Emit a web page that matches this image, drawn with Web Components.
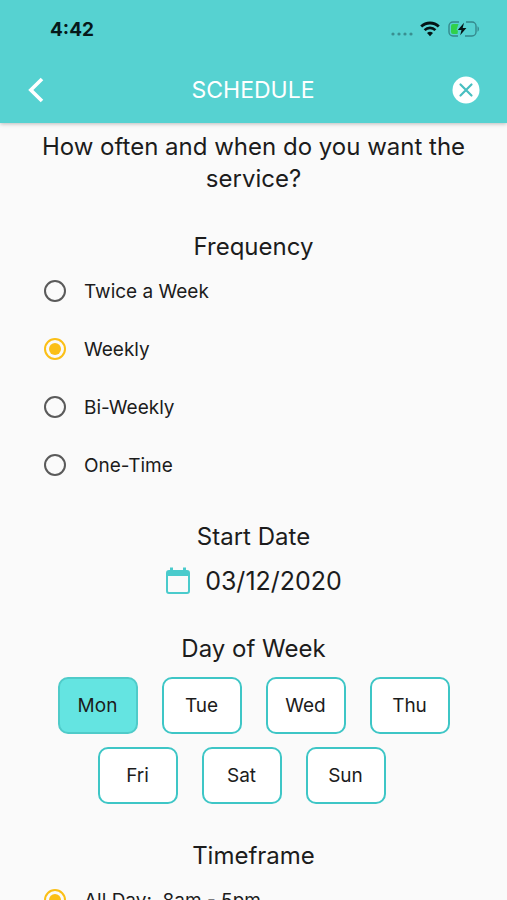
<!DOCTYPE html>
<html lang="en">
<head>
  <meta charset="UTF-8">
  <meta name="viewport" content="width=device-width, initial-scale=1.0">
  <title>Schedule</title>
  <style>
    body {
      margin: 0;
      font-family: Inter, "Liberation Sans", sans-serif;
      color: #1c1c1c;
      background-color: #fafafa;
    }
  </style>
</head>
<body>
  <schedule-page></schedule-page>

  <script>
    class StatusBar extends HTMLElement {
      constructor() {
        super();
        this.attachShadow({ mode: 'open' });
      }

      connectedCallback() {
        this.shadowRoot.innerHTML = `
          <style>
            :host {
              display: flex;
              justify-content: space-between;
              align-items: center;
              height: 58px;
              padding: 0 26px 0 50px;
              color: #06191a;
              font-size: 19px;
              font-weight: 700;
            }
            .icons { display: flex; align-items: center; gap: 7px; }
            svg { display: block; }
          </style>
          <time>${this.getAttribute('time')}</time>
          <div class="icons">
            <svg width="23" height="18" viewBox="0 0 23 18" fill="#398f91" aria-hidden="true">
              <circle cx="3" cy="14" r="1.6"/><circle cx="9" cy="14" r="1.6"/>
              <circle cx="15" cy="14" r="1.6"/><circle cx="21" cy="14" r="1.6"/>
            </svg>
            <svg width="20" height="18" viewBox="0 0 20 18" fill="none" stroke="#041415" aria-hidden="true">
              <path d="M1.2 6.6a12.6 12.6 0 0 1 17.6 0" stroke-width="2.8"/>
              <path d="M4.6 10.1a7.7 7.7 0 0 1 10.8 0" stroke-width="2.7"/>
              <path d="M10 16.2l-3-3.1a4.3 4.3 0 0 1 6 0z" fill="#041415" stroke="none"/>
            </svg>
            <svg width="34" height="18" viewBox="0 0 34 18" aria-hidden="true">
              <path d="M12 2H6a4 4 0 0 0-4 4v6a4 4 0 0 0 4 4h5M19 2h6a4 4 0 0 1 4 4v6a4 4 0 0 1-4 4h-7" fill="none" stroke="#35888c" stroke-width="1.4"/>
              <path d="M30.5 6.3c1.9.6 1.9 4.8 0 5.4z" fill="#35888c"/>
              <path d="M11.5 4H6a2 2 0 0 0-2 2v6a2 2 0 0 0 2 2h4.5l.5-3.5-1.5-.5z" fill="#30d04b"/>
              <path d="M17 2.8l-6.2 7.2h3.7l-1.3 5.2 6.2-7.2h-3.7z" fill="#041415"/>
            </svg>
          </div>
        `;
      }
    }

    class AppHeader extends HTMLElement {
      constructor() {
        super();
        this.attachShadow({ mode: 'open' });
      }

      connectedCallback() {
        this.shadowRoot.innerHTML = `
          <style>
            :host {
              display: block;
              flex: none;
              z-index: 1;
              background-color: #56d2d1;
              box-shadow: 0 1px 4px rgba(0, 0, 0, 0.25);
            }
            nav {
              display: grid;
              grid-template-columns: 40px 1fr 40px;
              align-items: center;
              height: 63px;
              padding: 0 21px 2px 20px;
            }
            h1 {
              margin: 0;
              color: white;
              font-size: 23px;
              font-weight: 400;
              text-align: center;
            }
            button {
              display: grid;
              place-items: center;
              height: 40px;
              padding: 0;
              border: 0;
              background: none;
              cursor: pointer;
            }
            button:first-child { justify-content: start; padding-left: 8px; }
          </style>
          <slot name="status"></slot>
          <nav>
            <button type="button" aria-label="Back">
              <svg width="16" height="26" viewBox="0 0 16 26" fill="none" stroke="white" stroke-width="3.6">
                <path d="M14 2L2.8 13 14 24"/>
              </svg>
            </button>
            <h1><slot></slot></h1>
            <button type="button" aria-label="Close">
              <svg width="28" height="28" viewBox="0 0 28 28">
                <circle cx="14" cy="14" r="13.5" fill="white"/>
                <path d="M8.5 8.5l11 11M19.5 8.5l-11 11" stroke="#48bfc1" stroke-width="2.2" stroke-linecap="round"/>
              </svg>
            </button>
          </nav>
        `;
      }
    }

    class FormSection extends HTMLElement {
      constructor() {
        super();
        this.attachShadow({ mode: 'open' });
      }

      connectedCallback() {
        this.shadowRoot.innerHTML = `
          <style>
            :host { display: block; }
            h2 {
              margin: 0;
              font-size: 24px;
              font-weight: 400;
              line-height: 32px;
              text-align: center;
            }
          </style>
          <h2>${this.getAttribute('heading')}</h2>
          <slot></slot>
        `;
      }
    }

    class RadioList extends HTMLElement {
      constructor() {
        super();
        this.attachShadow({ mode: 'open' });
      }

      connectedCallback() {
        const selected = this.getAttribute('selected');
        const rows = this.getAttribute('options').split('|').map((option) => `
          <label>
            <input type="radio" name="choice" value="${option}" ${option === selected ? 'checked' : ''}>
            <span>${option}</span>
          </label>
        `).join('');

        this.shadowRoot.innerHTML = `
          <style>
            :host {
              display: grid;
              gap: 18px;
              margin-top: 8px;
              padding: 0 44px;
            }
            label {
              display: flex;
              align-items: center;
              gap: 18px;
              height: 40px;
              font-size: 19px;
            }
            span { white-space: pre; }
            input {
              appearance: none;
              display: grid;
              place-items: center;
              box-sizing: border-box;
              width: 22px;
              height: 22px;
              margin: 0;
              border: 2px solid #5a5a5a;
              border-radius: 50%;
            }
            input:checked { border-color: #fbbf16; }
            input:checked::before {
              content: "";
              width: 12px;
              height: 12px;
              border-radius: 50%;
              background-color: #fbbf16;
            }
          </style>
          ${rows}
        `;
      }
    }

    class DateField extends HTMLElement {
      constructor() {
        super();
        this.attachShadow({ mode: 'open' });
      }

      connectedCallback() {
        this.shadowRoot.innerHTML = `
          <style>
            :host {
              display: flex;
              justify-content: center;
              margin-top: 12px;
            }
            button {
              display: flex;
              align-items: center;
              gap: 14px;
              padding: 0;
              border: 0;
              background: none;
              color: inherit;
              font: inherit;
              font-size: 25px;
              line-height: 32px;
              cursor: pointer;
            }
          </style>
          <button type="button">
            <svg width="26" height="28" viewBox="0 0 26 28" aria-hidden="true">
              <path d="M4 3h1V.5h3V3h10V.5h3V3h1a3 3 0 0 1 3 3v18a3 3 0 0 1-3 3H4a3 3 0 0 1-3-3V6a3 3 0 0 1 3-3zM3 9v15a1 1 0 0 0 1 1h18a1 1 0 0 0 1-1V9z" fill="#4acbcc" fill-rule="evenodd"/>
            </svg>
            <span>${this.getAttribute('value')}</span>
          </button>
        `;
      }
    }

    class DayPicker extends HTMLElement {
      constructor() {
        super();
        this.attachShadow({ mode: 'open' });
      }

      connectedCallback() {
        const days = ['Mon', 'Tue', 'Wed', 'Thu', 'Fri', 'Sat', 'Sun'];
        const selected = this.getAttribute('selected');

        this.shadowRoot.innerHTML = `
          <style>
            :host {
              display: flex;
              flex-wrap: wrap;
              justify-content: center;
              gap: 13px 24px;
              max-width: 440px;
              margin: 12px auto 0;
            }
            button {
              box-sizing: border-box;
              width: 80px;
              height: 57px;
              padding: 0;
              border: 2px solid #3ec6c6;
              border-radius: 10px;
              background-color: white;
              color: inherit;
              font: inherit;
              font-size: 19px;
              cursor: pointer;
            }
            button:last-child { margin-right: 24px; }
            button[aria-pressed="true"] {
              border-color: #4fcbc9;
              background-color: #64e4e1;
            }
          </style>
          ${days.map((day) => `<button type="button" aria-pressed="${day === selected}">${day}</button>`).join('')}
        `;

        const buttons = this.shadowRoot.querySelectorAll('button');
        buttons.forEach((button) => {
          button.addEventListener('click', () => {
            buttons.forEach((other) => other.setAttribute('aria-pressed', other === button));
          });
        });
      }
    }

    class SchedulePage extends HTMLElement {
      constructor() {
        super();
        this.attachShadow({ mode: 'open' });
      }

      connectedCallback() {
        this.shadowRoot.innerHTML = `
          <style>
            :host {
              display: flex;
              flex-direction: column;
              height: 100vh;
            }
            main {
              display: flex;
              flex: 1;
              flex-direction: column;
              gap: 36px;
              min-height: 0;
              padding-top: 8px;
              overflow-y: auto;
              scrollbar-width: none;
            }
            main > * { flex: none; }
            p {
              margin: 0;
              padding: 0 32px;
              font-size: 24px;
              line-height: 32px;
              text-align: center;
            }
          </style>
          <app-header>
            <status-bar slot="status" time="4:42"></status-bar>
            SCHEDULE
          </app-header>
          <main>
            <p>How often and when do you want the service?</p>
            <form-section heading="Frequency">
              <radio-list options="Twice a Week|Weekly|Bi-Weekly|One-Time" selected="Weekly"></radio-list>
            </form-section>
            <form-section heading="Start Date">
              <date-field value="03/12/2020"></date-field>
            </form-section>
            <form-section heading="Day of Week">
              <day-picker selected="Mon"></day-picker>
            </form-section>
            <form-section heading="Timeframe">
              <radio-list options="All Day:  8am - 5pm" selected="All Day:  8am - 5pm"></radio-list>
            </form-section>
          </main>
        `;
      }
    }

    customElements.define('status-bar', StatusBar);
    customElements.define('app-header', AppHeader);
    customElements.define('form-section', FormSection);
    customElements.define('radio-list', RadioList);
    customElements.define('date-field', DateField);
    customElements.define('day-picker', DayPicker);
    customElements.define('schedule-page', SchedulePage);
  </script>
</body>
</html>
